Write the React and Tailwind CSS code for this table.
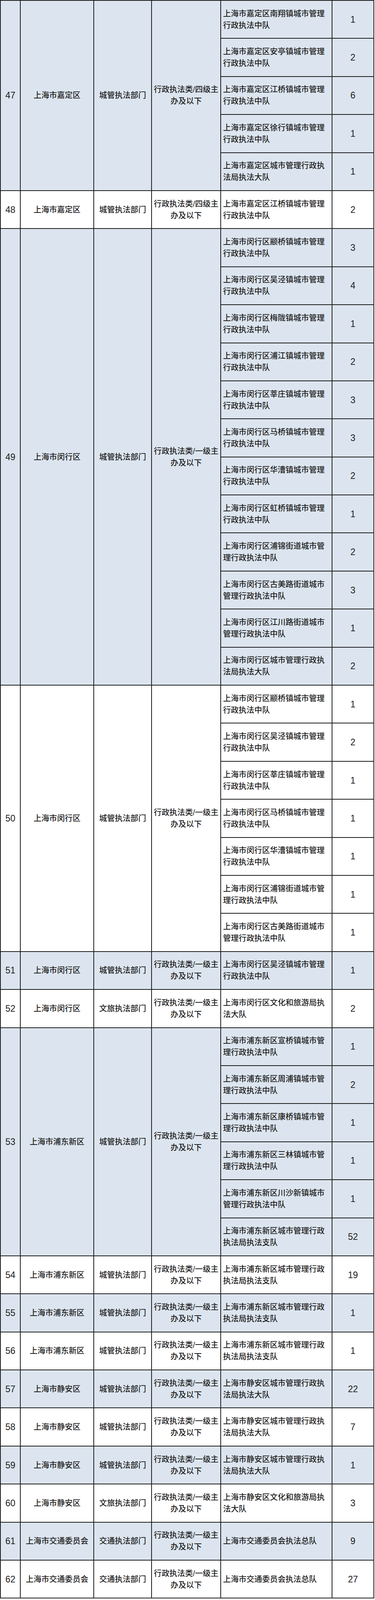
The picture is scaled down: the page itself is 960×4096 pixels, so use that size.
const L1 = "行政执法类/一级主\n办及以下";
const L4 = "行政执法类/四级主\n办及以下";

const rows = [
  {
    no: 47, area: "上海市嘉定区", dept: "城管执法部门", level: L4,
    units: [
      ["上海市嘉定区南翔镇城市管理\n行政执法中队", 1],
      ["上海市嘉定区安亭镇城市管理\n行政执法中队", 2],
      ["上海市嘉定区江桥镇城市管理\n行政执法中队", 6],
      ["上海市嘉定区徐行镇城市管理\n行政执法中队", 1],
      ["上海市嘉定区城市管理行政执\n法局执法大队", 1],
    ],
  },
  {
    no: 48, area: "上海市嘉定区", dept: "城管执法部门", level: L4,
    units: [["上海市嘉定区江桥镇城市管理\n行政执法中队", 2]],
  },
  {
    no: 49, area: "上海市闵行区", dept: "城管执法部门", level: L1,
    units: [
      ["上海市闵行区颛桥镇城市管理\n行政执法中队", 3],
      ["上海市闵行区吴泾镇城市管理\n行政执法中队", 4],
      ["上海市闵行区梅陇镇城市管理\n行政执法中队", 1],
      ["上海市闵行区浦江镇城市管理\n行政执法中队", 2],
      ["上海市闵行区莘庄镇城市管理\n行政执法中队", 3],
      ["上海市闵行区马桥镇城市管理\n行政执法中队", 3],
      ["上海市闵行区华漕镇城市管理\n行政执法中队", 2],
      ["上海市闵行区虹桥镇城市管理\n行政执法中队", 1],
      ["上海市闵行区浦锦街道城市管\n理行政执法中队", 2],
      ["上海市闵行区古美路街道城市\n管理行政执法中队", 3],
      ["上海市闵行区江川路街道城市\n管理行政执法中队", 1],
      ["上海市闵行区城市管理行政执\n法局执法大队", 2],
    ],
  },
  {
    no: 50, area: "上海市闵行区", dept: "城管执法部门", level: L1,
    units: [
      ["上海市闵行区颛桥镇城市管理\n行政执法中队", 1],
      ["上海市闵行区吴泾镇城市管理\n行政执法中队", 2],
      ["上海市闵行区莘庄镇城市管理\n行政执法中队", 1],
      ["上海市闵行区马桥镇城市管理\n行政执法中队", 1],
      ["上海市闵行区华漕镇城市管理\n行政执法中队", 1],
      ["上海市闵行区浦锦街道城市管\n理行政执法中队", 1],
      ["上海市闵行区古美路街道城市\n管理行政执法中队", 1],
    ],
  },
  {
    no: 51, area: "上海市闵行区", dept: "城管执法部门", level: L1,
    units: [["上海市闵行区吴泾镇城市管理\n行政执法中队", 1]],
  },
  {
    no: 52, area: "上海市闵行区", dept: "文旅执法部门", level: L1,
    units: [["上海市闵行区文化和旅游局执\n法大队", 2]],
  },
  {
    no: 53, area: "上海市浦东新区", dept: "城管执法部门", level: L1,
    units: [
      ["上海市浦东新区宣桥镇城市管\n理行政执法中队", 1],
      ["上海市浦东新区周浦镇城市管\n理行政执法中队", 2],
      ["上海市浦东新区康桥镇城市管\n理行政执法中队", 1],
      ["上海市浦东新区三林镇城市管\n理行政执法中队", 1],
      ["上海市浦东新区川沙新镇城市\n管理行政执法中队", 1],
      ["上海市浦东新区城市管理行政\n执法局执法支队", 52],
    ],
  },
  {
    no: 54, area: "上海市浦东新区", dept: "城管执法部门", level: L1,
    units: [["上海市浦东新区城市管理行政\n执法局执法支队", 19]],
  },
  {
    no: 55, area: "上海市浦东新区", dept: "城管执法部门", level: L1,
    units: [["上海市浦东新区城市管理行政\n执法局执法支队", 1]],
  },
  {
    no: 56, area: "上海市浦东新区", dept: "城管执法部门", level: L1,
    units: [["上海市浦东新区城市管理行政\n执法局执法支队", 1]],
  },
  {
    no: 57, area: "上海市静安区", dept: "城管执法部门", level: L1,
    units: [["上海市静安区城市管理行政执\n法局执法大队", 22]],
  },
  {
    no: 58, area: "上海市静安区", dept: "城管执法部门", level: L1,
    units: [["上海市静安区城市管理行政执\n法局执法大队", 7]],
  },
  {
    no: 59, area: "上海市静安区", dept: "城管执法部门", level: L1,
    units: [["上海市静安区城市管理行政执\n法局执法大队", 1]],
  },
  {
    no: 60, area: "上海市静安区", dept: "文旅执法部门", level: L1,
    units: [["上海市静安区文化和旅游局执\n法大队", 3]],
  },
  {
    no: 61, area: "上海市交通委员会", dept: "交通执法部门", level: L1,
    units: [["上海市交通委员会执法总队", 9]],
  },
  {
    no: 62, area: "上海市交通委员会", dept: "交通执法部门", level: L1,
    units: [["上海市交通委员会执法总队", 27]],
  },
];

const cell =
  "shrink-0 border-r-2 border-b-2 border-[#1c1c1c] flex items-center justify-center";

const Group = ({ row, shaded }) => (
  <div className={`flex ${shaded ? "bg-[#dce5ef]" : "bg-white"}`}>
    <div className={`${cell} w-[51px] text-[23px] font-normal`}>{row.no}</div>
    <div className={`${cell} w-[188px]`}>{row.area}</div>
    <div className={`${cell} w-[148px]`}>{row.dept}</div>
    <div className={`${cell} w-[177px] text-center whitespace-pre-line`}>
      {row.level}
    </div>
    <div className="flex flex-col">
      {row.units.map(([name, count], i) => (
        <div key={i} className="flex h-[97.4px]">
          <div className="w-[285px] shrink-0 border-r-2 border-b-2 border-[#1c1c1c] flex items-center pl-[5px] whitespace-pre-line">
            {name}
          </div>
          <div className={`${cell} w-[107px] text-[23px] font-normal`}>{count}</div>
        </div>
      ))}
    </div>
  </div>
);

export default function App() {
  return (
    <div className="w-[960px] bg-white font-['Liberation_Sans','Noto_Sans_CJK_SC',sans-serif] text-[20px] leading-[30px] font-medium text-[#1e1e1e]">
      <div className="w-[958px] border-l-2 border-t-2 border-[#1c1c1c]">
        {rows.map((row, i) => (
          <Group key={row.no} row={row} shaded={i % 2 === 0} />
        ))}
      </div>
    </div>
  );
}
